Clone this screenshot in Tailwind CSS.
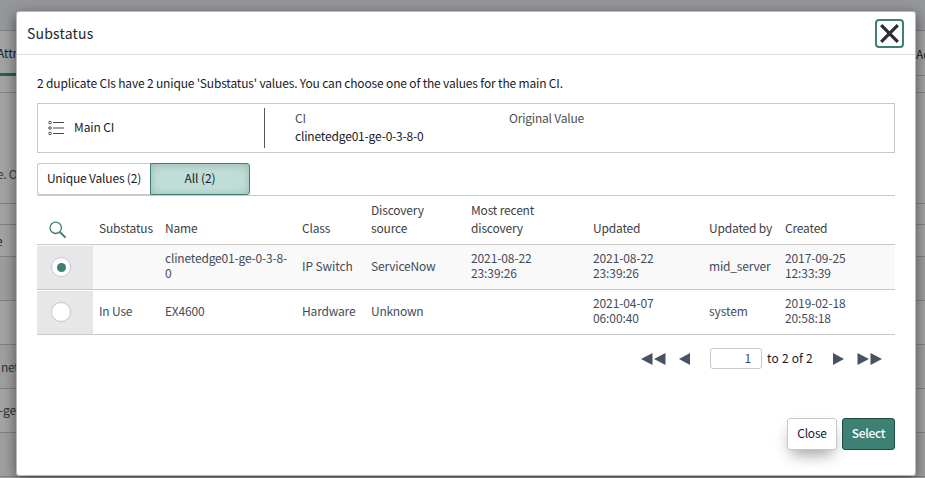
<!DOCTYPE html>
<html lang="en">
<head>
<meta charset="utf-8">
<title>Substatus</title>
<script src="https://cdn.jsdelivr.net/npm/@tailwindcss/browser@4"></script>
</head>
<body class="relative h-[478px] w-[925px] overflow-hidden bg-[#a3a3a3] font-['Noto_Sans_CJK_SC','Noto_Sans',sans-serif] text-[12px] leading-[18px] tracking-[-0.1px] text-[#181a1f]">
  <!-- page behind the dialog -->
  <div class="flex h-full flex-col">
    <div class="h-[31px] shrink-0 border-b border-[#818386] bg-[#95979a]"></div>
    <div class="flex h-[45px] shrink-0 items-center justify-between border-b border-[#858585]">
      <div class="flex h-[45px] w-[100px] items-center border-b-[3px] border-[#285e52] pt-[3px]"><span class="-ml-[3px]">Attributes</span></div>
      <div class="w-[9px] pt-[2px] whitespace-nowrap">Activity</div>
    </div>
    <div class="h-[17px] shrink-0 border-b border-[#858585]"></div>
    <div class="flex h-[111px] shrink-0 items-end border-b border-[#828282] pb-[20px]"><span class="-ml-[3px] tracking-[-0.3px] text-[#3a3c40]">e. One</span></div>
    <div class="h-[21px] shrink-0 border-b border-[#828282]"></div>
    <div class="flex h-[32px] shrink-0 items-center border-b border-[#828282]"><span class="-ml-[4px]">e</span></div>
    <div class="h-[44px] shrink-0 border-b border-[#828282] bg-[#9d9d9d]"></div>
    <div class="h-[44px] shrink-0 border-b border-[#828282]"></div>
    <div class="flex h-[44px] shrink-0 items-center border-b border-[#828282] bg-[#9f9f9f] text-[#29323d]"><span class="ml-[1px] tracking-[-0.3px]">net</span></div>
    <div class="flex h-[44px] shrink-0 items-center border-b border-[#828282] pb-[2px] text-[#29323d]"><span class="-ml-px">-ge</span></div>
    <div class="h-[44px] shrink-0 border-b border-[#828282] bg-[#9f9f9f]"></div>
  </div>

  <!-- dialog -->
  <div class="absolute top-[11px] left-[16px] flex h-[465px] w-[900px] flex-col rounded-[3px] border border-[#b8b8b8] bg-white shadow-[0_4px_14px_rgba(0,0,0,0.5)]">
    <div class="flex h-[43px] shrink-0 items-center justify-between border-b border-[#dedede] pr-[11px] pl-[10px]">
      <h1 class="text-[14px] tracking-[0.2px] text-[#25272b]">Substatus</h1>
      <button class="flex h-[29px] w-[29px] items-center justify-center rounded-[4px] border-2 border-[#3d8074]">
        <svg class="h-[19px] w-[19px]" viewBox="0 0 19 19" stroke="#2b2d31" stroke-width="3.2" fill="none"><path d="M1.2 1.2 17.8 17.8M17.8 1.2 1.2 17.8"/></svg>
      </button>
    </div>

    <div class="flex flex-col px-[20px] pt-[19px]">
      <p class="h-[18px] tracking-[-0.168px] whitespace-nowrap">2 duplicate CIs have 2 unique 'Substatus' values. You can choose one of the values for the main CI.</p>

      <div class="mt-[11px] flex h-[50px] items-center border border-[#c8c8c8]">
        <div class="flex h-[40px] w-[227px] items-center border-r border-[#555]">
          <svg class="ml-[10px] h-[16px] w-[17px]" viewBox="0 0 17 16" fill="none" stroke="#484a4e" stroke-width="1"><circle cx="2" cy="2.5" r="1.3"/><circle cx="2" cy="8" r="1.3"/><circle cx="2" cy="13.5" r="1.3"/><path d="M5 2.5h11M5 8h11M5 13.5h11" stroke-width="1.2"/></svg>
          <span class="ml-[9px] pb-[2px]">Main CI</span>
        </div>
        <div class="h-[38px] w-[214px] pl-[30px]"><div class="text-[#4c4e52]">CI</div><div class="tracking-[-0.17px]">clinetedge01-ge-0-3-8-0</div></div>
        <div class="h-[38px] pl-[30px] tracking-[-0.2px] text-[#4c4e52]">Original Value</div>
      </div>

      <div class="mt-[10px] flex h-[33px] border-b border-[#c8c8c8]">
        <button class="h-[32px] w-[113px] rounded-l-[3px] border border-r-0 border-[#c8c8c8] pb-[3px] tracking-[-0.17px] whitespace-nowrap">Unique Values (2)</button>
        <button class="h-[32px] w-[100px] rounded-r-[3px] border border-[#3d8074] bg-[#bfded7] pb-[3px] shadow-[inset_0_1px_8px_rgba(0,0,0,0.18)]">All (2)</button>
      </div>

      <div class="grid h-[49px] grid-cols-[56px_66px_137px_69px_100px_122px_116px_76px_116px] items-end border-b border-[#c8c8c8] pb-[7px] tracking-[-0.18px] text-[#3c3e42] *:pl-[6px] *:whitespace-nowrap">
        <div class="-mb-[2px]"><svg class="ml-[6px] h-[18px] w-[18px]" viewBox="0 0 18 18" fill="none" stroke="#3d8074"><circle cx="6.7" cy="6.8" r="5.7" stroke-width="1.3"/><path d="M10.8 11 16.6 16.6" stroke-width="2"/></svg></div>
        <div>Substatus</div><div>Name</div><div>Class</div><div>Discovery<br>source</div><div>Most recent<br>discovery</div><div>Updated</div><div>Updated by</div><div>Created</div>
      </div>
      <div class="grid h-[45px] grid-cols-[56px_66px_137px_69px_100px_122px_116px_76px_116px] items-center border-b border-[#c8c8c8] bg-[#f9f9f9] leading-[15px] text-[#434c5a] *:pb-[3px] *:pl-[6px] *:whitespace-nowrap">
        <div class="flex h-[44px] items-center border-t border-white bg-[#e6e7e9]"><span class="mt-[2px] ml-[8px] flex h-[20px] w-[20px] items-center justify-center rounded-full border border-[#c8c8c8] bg-white"><span class="h-[9px] w-[9px] rounded-full bg-[#3d8074]"></span></span></div>
        <div></div><div class="pb-[5px]! tracking-[-0.18px]">clinetedge01-ge-0-3-8-<br>0</div><div>IP Switch</div><div class="tracking-[-0.18px]">ServiceNow</div><div class="pb-[5px]!">2021-08-22<br>23:39:26</div><div class="pb-[5px]!">2021-08-22<br>23:39:26</div><div class="tracking-[-0.18px]">mid_server</div><div class="pb-[5px]!">2017-09-25<br>12:33:39</div>
      </div>
      <div class="grid h-[45px] grid-cols-[56px_66px_137px_69px_100px_122px_116px_76px_116px] items-center border-b border-[#c8c8c8] leading-[15px] text-[#434c5a] *:pb-[3px] *:pl-[6px] *:whitespace-nowrap">
        <div class="flex h-[44px] items-center border-t border-white bg-[#e6e7e9]"><span class="mt-[2px] ml-[8px] h-[20px] w-[20px] rounded-full border border-[#c8c8c8] bg-white"></span></div>
        <div class="tracking-[-0.18px]">In Use</div><div class="tracking-[-0.2px]">EX4600</div><div class="tracking-[-0.18px]">Hardware</div><div class="tracking-[-0.25px]">Unknown</div><div></div><div class="pb-[5px]!">2021-04-07<br>06:00:40</div><div>system</div><div class="pb-[5px]!">2019-02-18<br>20:58:18</div>
      </div>

      <div class="mt-[13px] flex h-[21px] items-center justify-end pr-[13px]">
        <svg class="h-[12px] w-[25px]" viewBox="0 0 25 12" fill="#485361"><path d="M11.5 0v12L0 6zM24.5 0v12L13 6z"/></svg>
        <svg class="ml-[13px] h-[12px] w-[11px]" viewBox="0 0 11 12" fill="#485361"><path d="M11 0v12L0 6z"/></svg>
        <div class="ml-[20px] flex h-[21px] w-[52px] items-center justify-end rounded-[3px] border border-[#c8c8c8] pr-[10px] pb-px text-[#434c5a]">1</div>
        <span class="ml-[5px] w-[46px] pb-[2px] tracking-[0.2px] whitespace-nowrap">to 2 of 2</span>
        <svg class="ml-[20px] h-[12px] w-[11px]" viewBox="0 0 11 12" fill="#485361"><path d="M0 0v12L11 6z"/></svg>
        <svg class="ml-[13px] h-[12px] w-[25px]" viewBox="0 0 25 12" fill="#485361"><path d="M.5 0v12L12 6zM13.5 0v12L25 6z"/></svg>
      </div>

      <div class="mt-[49px] flex justify-end gap-[5px]">
        <button class="h-[32px] w-[50px] rounded-[3px] border border-[#c8c8c8] bg-white pb-[2px] tracking-[-0.2px] shadow-[0_8px_16px_-4px_rgba(0,0,0,0.4)]">Close</button>
        <button class="h-[32px] w-[53px] rounded-[3px] border border-[#1f4a41] bg-[#3d8074] pb-[2px] font-medium tracking-[-0.3px] text-white">Select</button>
      </div>
    </div>
  </div>
</body>
</html>
